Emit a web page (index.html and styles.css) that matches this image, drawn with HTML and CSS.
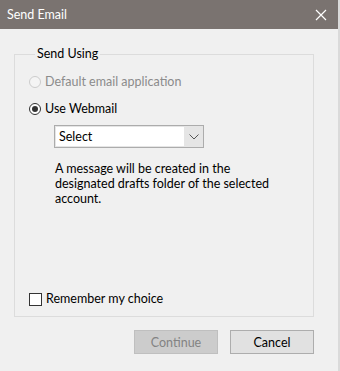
FILE: index.html
```html
<!DOCTYPE html>
<html lang="en">

<head>
    <meta charset="UTF-8">
    <title>Send Email</title>
    <link rel="stylesheet" href="styles.css">
</head>

<body>
    <div class="window">
        <div class="titlebar">
            <span class="title">Send Email</span>
            <svg class="close" width="12" height="12" viewBox="0 0 12 12">
                <path d="M1 1 L11 11 M11 1 L1 11" stroke="#fff" stroke-width="1.2" fill="none" />
            </svg>
        </div>

        <div class="content">
            <fieldset class="group">
                <legend>Send Using</legend>

                <label class="option disabled">
                    <span class="radio"></span>
                    Default email application
                </label>

                <label class="option">
                    <span class="radio checked"></span>
                    Use Webmail
                </label>

                <div class="select">
                    <span class="select-value">Select</span>
                    <span class="select-arrow">
                        <svg width="10" height="6" viewBox="0 0 10 6">
                            <path d="M0.5 0.5 L5 5 L9.5 0.5" stroke="#555" stroke-width="1" fill="none" />
                        </svg>
                    </span>
                </div>

                <p class="note">A message will be created in the<br>designated drafts folder of the selected<br>account.</p>

                <!-- Remember checkbox sits at the bottom of the group -->
                <label class="option remember">
                    <span class="checkbox"></span>
                    Remember my choice
                </label>
            </fieldset>

            <div class="buttons">
                <button class="btn" disabled>Continue</button>
                <button class="btn">Cancel</button>
            </div>
        </div>
    </div>
</body>

</html>
```

FILE: styles.css
```css
body {
    margin: 0;
    font-family: Lato, 'Noto Sans', sans-serif;
    font-size: 12.5px;
    color: #000;
    background-color: #f0f0f0;
}

.window {
    height: 371px;
    border-right: 2px solid #dadada;
    box-sizing: border-box;
}

.titlebar {
    height: 29px;
    background-color: #7a7370;
    color: white;
    display: flex;
    align-items: center;
    justify-content: space-between;
    padding: 0 11px 0 7px;
}

.title {
    font-size: 12.5px;
}

.content {
    padding: 17px 24px 0 14px;
}

.group {
    margin: 0;
    padding: 0 0 0 14px;
    height: 271px;
    box-sizing: border-box;
    border: 1px solid #dcdcdc;
    display: flex;
    flex-direction: column;
    align-items: flex-start;
}

.group legend {
    margin-left: 6px;
    padding: 0 2px;
    line-height: 16px;
}

.option {
    display: flex;
    align-items: center;
    gap: 4px;
    height: 16px;
    line-height: 16px;
}

.option:first-of-type {
    margin-top: 12px;
}

.option + .option {
    margin-top: 11px;
}

.option.disabled {
    color: #8b8b8b;
}

.radio {
    width: 10px;
    height: 10px;
    border: 1px solid #333;
    border-radius: 50%;
    background-color: #fff;
    position: relative;
}

.option.disabled .radio {
    border-color: #cccccc;
    background-color: #f4f4f4;
}

.radio.checked::after {
    content: '';
    position: absolute;
    left: 2px;
    top: 2px;
    width: 6px;
    height: 6px;
    border-radius: 50%;
    background-color: #333;
}

.select {
    margin: 8px 0 0 25px;
    width: 150px;
    height: 23px;
    box-sizing: border-box;
    border: 1px solid #acacac;
    display: flex;
    background-color: #e5e5e5;
}

.select-value {
    flex: 1;
    background-color: #fff;
    margin: 1px 0 1px 1px;
    padding-left: 3px;
    line-height: 19px;
}

.select-arrow {
    width: 19px;
    display: flex;
    align-items: center;
    justify-content: center;
}

.note {
    margin: 13px 0 0 26px;
    line-height: 15px;
}

.remember {
    margin-top: auto;
    margin-bottom: 9px;
}

.checkbox {
    width: 11px;
    height: 11px;
    border: 1px solid #333;
    background-color: #fff;
}

.buttons {
    display: flex;
    justify-content: flex-end;
    gap: 12px;
    margin-top: 13px;
}

.btn {
    width: 84px;
    height: 24px;
    font-family: inherit;
    font-size: 12.5px;
    color: #000;
    background-color: #e1e1e1;
    border: 1px solid #adadad;
    padding: 0;
}

.btn:disabled {
    color: #838383;
    background-color: #cccccc;
    border-color: #bfbfbf;
}
```
